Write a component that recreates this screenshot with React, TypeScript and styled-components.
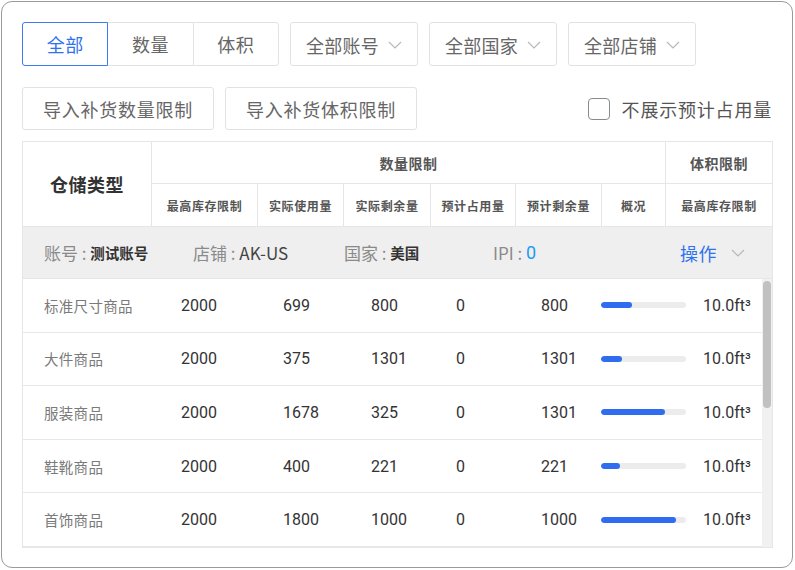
import React from 'react';
import styled, { createGlobalStyle } from 'styled-components';

const GlobalStyle = createGlobalStyle`
  html, body {
    margin: 0;
    padding: 0;
    background: #ffffff;
  }
  body {
    font-family: "Noto Sans CJK SC", "Noto Sans", sans-serif;
  }
  * {
    box-sizing: border-box;
  }
`;

const CJK = `"Noto Sans CJK SC", "Noto Sans", sans-serif`;
const NUM = `Roboto, "Noto Sans CJK SC", sans-serif`;

interface IRow {
  name: string;
  max: number;
  used: number;
  left: number;
  planned: number;
  planLeft: number;
  ratio: number;
  volume: string;
}

const rows: IRow[] = [
  { name: '标准尺寸商品', max: 2000, used: 699, left: 800, planned: 0, planLeft: 800, ratio: 0.36, volume: '10.0' },
  { name: '大件商品', max: 2000, used: 375, left: 1301, planned: 0, planLeft: 1301, ratio: 0.25, volume: '10.0' },
  { name: '服装商品', max: 2000, used: 1678, left: 325, planned: 0, planLeft: 1301, ratio: 0.75, volume: '10.0' },
  { name: '鞋靴商品', max: 2000, used: 400, left: 221, planned: 0, planLeft: 221, ratio: 0.22, volume: '10.0' },
  { name: '首饰商品', max: 2000, used: 1800, left: 1000, planned: 0, planLeft: 1000, ratio: 0.88, volume: '10.0' },
];

const Chevron = () => (
  <svg width="14" height="8" viewBox="0 0 14 8" fill="none">
    <polyline points="1,1 7,7 13,1" stroke="#b8b8b8" strokeWidth="1.2" fill="none" />
  </svg>
);

const App = () => {
  return (
    <>
      <GlobalStyle />
      <StyledFrame>
        <div className="toolbar">
          <Segmented>
            <SegButton active>全部</SegButton>
            <SegButton>数量</SegButton>
            <SegButton>体积</SegButton>
          </Segmented>
          <Select>
            <span>全部账号</span>
            <Chevron />
          </Select>
          <Select>
            <span>全部国家</span>
            <Chevron />
          </Select>
          <Select>
            <span>全部店铺</span>
            <Chevron />
          </Select>
        </div>
        <div className="actions">
          <ActionButton>导入补货数量限制</ActionButton>
          <ActionButton>导入补货体积限制</ActionButton>
          <CheckLabel>
            <Checkbox />
            <span>不展示预计占用量</span>
          </CheckLabel>
        </div>
        <Table>
          <Head>
            <HeadCell col="1" row="1 / span 2" big>
              仓储类型
            </HeadCell>
            <HeadCell col="2 / span 6" row="1" group>
              数量限制
            </HeadCell>
            <HeadCell col="8" row="1" group last>
              体积限制
            </HeadCell>
            <HeadCell col="2" row="2" bottom>
              最高库存限制
            </HeadCell>
            <HeadCell col="3" row="2" bottom>
              实际使用量
            </HeadCell>
            <HeadCell col="4" row="2" bottom>
              实际剩余量
            </HeadCell>
            <HeadCell col="5" row="2" bottom>
              预计占用量
            </HeadCell>
            <HeadCell col="6" row="2" bottom>
              预计剩余量
            </HeadCell>
            <HeadCell col="7" row="2" bottom>
              概况
            </HeadCell>
            <HeadCell col="8" row="2" bottom last>
              最高库存限制
            </HeadCell>
          </Head>
          <InfoRow>
            <InfoItem width={149}>
              <span className="label">账号 : </span>
              <span className="strong">测试账号</span>
            </InfoItem>
            <InfoItem width={151}>
              <span className="label">店铺 : </span>
              <span className="value">AK-US</span>
            </InfoItem>
            <InfoItem width={149}>
              <span className="label">国家 : </span>
              <span className="strong">美国</span>
            </InfoItem>
            <InfoItem width={187}>
              <span className="label">IPI : </span>
              <span className="ipi">0</span>
            </InfoItem>
            <Operate>
              <span>操作</span>
              <Chevron />
            </Operate>
          </InfoRow>
          <Body>
            {rows.map((r) => (
              <BodyRow key={r.name}>
                <NameCell>{r.name}</NameCell>
                <NumCell>{r.max}</NumCell>
                <NumCell>{r.used}</NumCell>
                <NumCell>{r.left}</NumCell>
                <NumCell>{r.planned}</NumCell>
                <NumCell>{r.planLeft}</NumCell>
                <BarCell>
                  <Track>
                    <Fill style={{ width: `${r.ratio * 100}%` }} />
                  </Track>
                </BarCell>
                <NumCell>{r.volume}ft³</NumCell>
              </BodyRow>
            ))}
            <ScrollTrack>
              <ScrollThumb />
            </ScrollTrack>
          </Body>
        </Table>
      </StyledFrame>
    </>
  );
};

const StyledFrame = styled.div`
  margin: 1px;
  width: 792px;
  height: 567px;
  border: 1px solid #9a9a9a;
  border-radius: 11px;
  padding: 20px 20px 0 20px;
  overflow: hidden;
  background: #fff;

  .toolbar {
    display: flex;
    gap: 11px;
    height: 44px;
  }
  .actions {
    margin-top: 21px;
    display: flex;
    align-items: center;
    gap: 11px;
    height: 43px;
  }
`;

const Segmented = styled.div`
  display: flex;
  width: 257px;
`;

const SegButton = styled.div<{ active?: boolean }>`
  flex: 1;
  height: 44px;
  display: flex;
  align-items: center;
  justify-content: center;
  font-family: ${CJK};
  font-size: 18px;
  letter-spacing: 0.5px;
  color: ${(p) => (p.active ? '#2f72ee' : '#666')};
  border: 1px solid ${(p) => (p.active ? '#3b7cf0' : '#e2e2e2')};
  background: #fff;
  position: relative;
  z-index: ${(p) => (p.active ? 1 : 0)};
  & + & {
    margin-left: -1px;
  }
  &:first-child {
    border-radius: 3px 0 0 3px;
  }
  &:last-child {
    border-radius: 0 3px 3px 0;
  }
`;

const Select = styled.div`
  width: 128px;
  height: 44px;
  display: flex;
  align-items: center;
  justify-content: center;
  gap: 9px;
  border: 1px solid #e2e2e2;
  border-radius: 3px;
  font-family: ${CJK};
  font-size: 18px;
  letter-spacing: 0.3px;
  color: #666;
  padding-top: 1px;
`;

const ActionButton = styled.div`
  height: 43px;
  padding: 0 20px;
  display: flex;
  align-items: center;
  border: 1px solid #e2e2e2;
  border-radius: 3px;
  font-family: ${CJK};
  font-size: 18px;
  letter-spacing: 0.75px;
  color: #666;
`;

const CheckLabel = styled.div`
  margin-left: auto;
  display: flex;
  align-items: center;
  gap: 12px;
  font-family: ${CJK};
  font-size: 18px;
  letter-spacing: 0.8px;
  color: #555;
`;

const Checkbox = styled.span`
  width: 22px;
  height: 22px;
  border: 1.5px solid #8a8a8a;
  border-radius: 4px;
  display: inline-block;
`;

const Table = styled.div`
  margin-top: 11px;
  width: 751px;
  border: 1px solid #e6e6e6;
`;

const Head = styled.div`
  display: grid;
  grid-template-columns: 129px 106px 86px 87px 85px 86px 64px 106px;
  grid-template-rows: 42px 42px;
`;

const HeadCell = styled.div<{ col: string; row: string; big?: boolean; group?: boolean; bottom?: boolean; last?: boolean }>`
  grid-column: ${(p) => p.col};
  grid-row: ${(p) => p.row};
  display: flex;
  align-items: center;
  justify-content: center;
  border-right: ${(p) => (p.last ? 'none' : '1px solid #e6e6e6')};
  border-bottom: ${(p) => (p.big || p.bottom ? 'none' : '1px solid #e6e6e6')};
  font-family: ${CJK};
  font-weight: 700;
  color: ${(p) => (p.big ? '#333' : '#555')};
  font-size: ${(p) => (p.big ? '18px' : p.group ? '14px' : '12px')};
  letter-spacing: ${(p) => (p.big ? '0.5px' : p.group ? '0.5px' : '0.6px')};
`;

const InfoRow = styled.div`
  height: 53px;
  background: #efefef;
  border-top: 1px solid #e6e6e6;
  border-bottom: 1px solid #e6e6e6;
  display: flex;
  align-items: center;
  padding-left: 21px;
`;

const InfoItem = styled.div<{ width: number }>`
  width: ${(p) => p.width}px;
  display: flex;
  align-items: center;
  white-space: nowrap;

  .label {
    font-family: ${CJK};
    font-size: 17px;
    color: #8a8a8a;
    white-space: pre;
  }
  .strong {
    font-family: ${CJK};
    font-size: 14.5px;
    font-weight: 700;
    color: #333;
  }
  .value {
    font-family: ${CJK};
    font-size: 17px;
    color: #444;
  }
  .ipi {
    font-family: ${NUM};
    font-size: 18px;
    color: #1a9cf7;
  }
`;

const Operate = styled.div`
  display: flex;
  align-items: center;
  gap: 14px;
  font-family: ${CJK};
  font-size: 18px;
  color: #2f72ee;
  letter-spacing: 0.5px;
`;

const Body = styled.div`
  position: relative;
  padding-right: 10px;
`;

const BodyRow = styled.div`
  height: 53.6px;
  display: grid;
  grid-template-columns: 158px 102px 88px 85px 85px 60px 102px 59px;
  align-items: center;
  border-bottom: 1px solid #e8e8e8;
  &:last-of-type {
    border-bottom: none;
  }
`;

const ScrollTrack = styled.div`
  position: absolute;
  top: 0;
  right: 0;
  bottom: 0;
  width: 10px;
  background: #f1f1f1;
  padding: 2px 1px;
`;

const ScrollThumb = styled.div`
  height: 127px;
  border-radius: 4px;
  background: #c1c1c1;
`;

const NameCell = styled.div`
  padding-left: 21px;
  font-family: ${CJK};
  font-size: 14.5px;
  color: #7a7a7a;
  letter-spacing: 0.3px;
`;

const NumCell = styled.div`
  font-family: ${NUM};
  font-size: 16px;
  color: #333;
  white-space: nowrap;
`;

const BarCell = styled.div`
  display: flex;
  align-items: center;
`;

const Track = styled.div`
  width: 85px;
  height: 6px;
  border-radius: 3px;
  background: #ececec;
  overflow: hidden;
`;

const Fill = styled.div`
  height: 100%;
  border-radius: 3px;
  background: #2f6cef;
`;

export default App;
